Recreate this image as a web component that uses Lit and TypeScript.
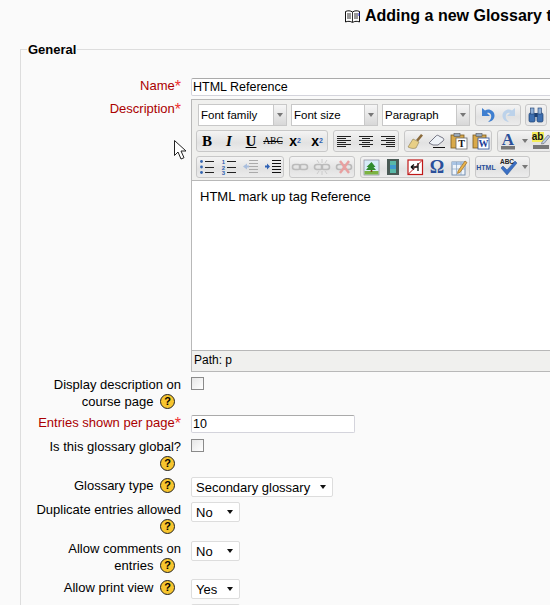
import { LitElement, html, css, svg } from 'lit';
import { customElement } from 'lit/decorators.js';

const lines = (x1: number, x2: number, ys: number[], color = '#222') =>
  ys.map((y) => svg`<line x1=${x1} x2=${x2} y1=${y} y2=${y} stroke=${color} stroke-width="1"></line>`);

const link = (c: string) => svg`
  <rect x="2.5" y="7.5" width="8" height="5" rx="2.5" fill="none" stroke=${c} stroke-width="1.6"></rect>
  <rect x="9.5" y="7.5" width="8" height="5" rx="2.5" fill="none" stroke=${c} stroke-width="1.6"></rect>`;

const ICONS: Record<string, unknown> = {
  left: lines(3, 17, [5.5, 9.5, 13.5]).concat(lines(3, 12, [7.5, 11.5, 15.5])),
  center: lines(3, 17, [5.5, 9.5, 13.5]).concat(lines(6, 14, [7.5, 11.5, 15.5])),
  right: lines(3, 17, [5.5, 9.5, 13.5]).concat(lines(8, 17, [7.5, 11.5, 15.5])),
  brush: svg`
    <path d="M11 9l5-6 2 1.5-5 6z" fill="#8a6a3a"></path>
    <path d="M3 16l5-8 6 3-3 6c-3 .8-5 .5-8-1z" fill="#e8cf86" stroke="#8a7a50" stroke-width=".6"></path>`,
  eraser: svg`
    <path d="M2 12l7-7c1-1 2-1 3 0l4 2c1 1 1 2 0 3l-5 4H6z" fill="#eef2f7" stroke="#667" stroke-width=".9"></path>
    <line x1="6" y1="16.5" x2="18" y2="16.5" stroke="#111"></line>`,
  pastetext: svg`
    <rect x="2" y="4" width="13" height="13" fill="#d9a94a" stroke="#7a5a20" stroke-width=".8"></rect>
    <rect x="5" y="2.5" width="6" height="3" fill="#9ab" stroke="#555" stroke-width=".6"></rect>
    <rect x="7" y="7" width="11" height="11" fill="#fff" stroke="#666" stroke-width=".8"></rect>
    <text x="12.5" y="16" text-anchor="middle" font-size="10" font-weight="700" font-family="Liberation Serif" fill="#111">T</text>`,
  pasteword: svg`
    <rect x="2" y="4" width="13" height="13" fill="#d9a94a" stroke="#7a5a20" stroke-width=".8"></rect>
    <rect x="5" y="2.5" width="6" height="3" fill="#9ab" stroke="#555" stroke-width=".6"></rect>
    <rect x="7" y="7" width="11" height="11" fill="#fff" stroke="#2a4f9a" stroke-width=".8"></rect>
    <text x="12.5" y="16" text-anchor="middle" font-size="10" font-weight="700" font-family="Liberation Serif" fill="#1f3f9a">W</text>`,
  bullist: svg`
    <circle cx="4.5" cy="4.5" r="1.4" fill="#3465b0"></circle>
    <circle cx="4.5" cy="10" r="1.4" fill="#3465b0"></circle>
    <circle cx="4.5" cy="15.5" r="1.4" fill="#3465b0"></circle>
    ${lines(8, 17, [4.5, 10.5, 15.5])}`,
  numlist: svg`
    <text x="4.5" y="7" text-anchor="middle" font-size="6" font-weight="700" font-family="Liberation Sans" fill="#2f5fb0">1</text>
    <text x="4.5" y="12.5" text-anchor="middle" font-size="6" font-weight="700" font-family="Liberation Sans" fill="#2f5fb0">2</text>
    <text x="4.5" y="18" text-anchor="middle" font-size="6" font-weight="700" font-family="Liberation Sans" fill="#2f5fb0">3</text>
    ${lines(8, 17, [4.5, 10.5, 15.5])}`,
  outdent: svg`
    ${lines(8, 17, [3.5, 6.5, 9.5, 12.5, 15.5], '#aaa')}
    <path d="M2 9.5l4-3v2h2v2H6v2z" fill="#a9bedd"></path>`,
  indent: svg`
    ${lines(9, 18, [3.5, 6.5, 9.5, 12.5, 15.5], '#111')}
    <path d="M7 9.5l-3-3v2H2v2h2v2z" fill="#2f62b5"></path>`,
  unlink: svg`
    ${link('#bbb')}
    <path d="M10 2v4M10 14v4M5 3l2 3M15 3l-2 3M5 17l2-3M15 17l-2-3" stroke="#ccc" fill="none"></path>`,
  linkoff: link('#bbb'),
  anchorx: svg`
    ${link('#b8b8b8')}
    <path d="M6 4l9 12M15 4L6 16" stroke="#e8a0a0" stroke-width="2.4" fill="none"></path>`,
  image: svg`
    <rect x="3" y="3" width="15" height="15" fill="#d6ecf8" stroke="#889" stroke-width=".7"></rect>
    <rect x="3.5" y="14" width="14" height="3.5" fill="#7cb342"></rect>
    <path d="M10.5 5l4 5-2 0 2.5 3h-10l2.5-3-2 0z" fill="#2e8b2e"></path>
    <rect x="9.7" y="13" width="1.6" height="2" fill="#7a4a1c"></rect>`,
  media: svg`
    <rect x="4" y="2" width="12" height="16" fill="#4a5a55"></rect>
    <rect x="7" y="4" width="6" height="12" fill="#59b8a8"></rect>
    <rect x="7" y="8" width="6" height="4" fill="#3f9ad0"></rect>`,
  anchor: svg`
    <rect x="3" y="3" width="14.5" height="14.5" fill="#fff" stroke="#c01818" stroke-width="1.2"></rect>
    <path d="M3.5 17L17 3.5" stroke="#c01818" stroke-width="1"></path>
    <path d="M13 6v8M13 10H6M6 10l3-2.5M6 10l3 2.5" stroke="#111" stroke-width="1.3" fill="none"></path>`,
  tableedit: svg`
    <rect x="3" y="5" width="13" height="13" fill="#eef4fb" stroke="#6c88aa" stroke-width=".9"></rect>
    <rect x="3" y="5" width="13" height="3" fill="#a9c4e4"></rect>
    <path d="M3 12h13M7.5 5v13M12 5v13" stroke="#8aa3c2" stroke-width=".7"></path>
    <path d="M9 14l7-10 2 1.5-7 10-2.5 1z" fill="#e9b44c" stroke="#8a5a18" stroke-width=".6"></path>`,
  spell: svg`
    <path d="M3 11l2-2 4 4 8-9 2 2-10 12z" fill="#3a6fc4" stroke="#24508f" stroke-width=".5"></path>
    <text x="9" y="7" text-anchor="middle" font-size="6.5" font-weight="700" font-family="Liberation Sans" fill="#222">ABC</text>`,
  undo: svg`
    <path d="M5 3v8h8l-3-3c3-1 5 2 4 5-.4 1.6-2 3-3 4 4-.4 6.5-3 6.5-6.5C17.5 6 12 3 8 5.5z" fill="#3f7fd0"></path>`,
  redo: svg`
    <path d="M15 3v8H7l3-3c-3-1-5 2-4 5 .4 1.6 2 3 3 4-4-.4-6.5-3-6.5-6.5C2.5 6 8 3 12 5.5z" fill="#bcd2ea"></path>`,
  find: svg`
    <rect x="3" y="8" width="6" height="9" rx="1.5" fill="#3d6fb0" stroke="#1d3f70" stroke-width=".7"></rect>
    <rect x="11" y="8" width="6" height="9" rx="1.5" fill="#3d6fb0" stroke="#1d3f70" stroke-width=".7"></rect>
    <rect x="4.5" y="3" width="3.5" height="6" fill="#8fb0d8" stroke="#1d3f70" stroke-width=".6"></rect>
    <rect x="12" y="3" width="3.5" height="6" fill="#8fb0d8" stroke="#1d3f70" stroke-width=".6"></rect>
    <rect x="8.5" y="8" width="3" height="4" fill="#1d3f70"></rect>`,
  forecolor: svg`
    <text x="10" y="14" text-anchor="middle" font-size="17" font-weight="700" font-family="Liberation Serif" fill="#2a4f9a">A</text>
    <rect x="3" y="15" width="14" height="3.5" fill="#777"></rect>`,
  hilite: svg`
    <rect x="1" y="1" width="12" height="10" fill="#f5ee5a"></rect>
    <text x="6.5" y="9" text-anchor="middle" font-size="10" font-family="Liberation Sans" fill="#111">ab</text>
    <path d="M11 11l6-7 2 1.5-6 7-2.5 .5z" fill="#b9cbe0" stroke="#667" stroke-width=".6"></path>
    <rect x="2" y="14" width="16" height="4" fill="#777"></rect>`,
};

@customElement('app-root')
export class AppRoot extends LitElement {
  static styles = css`
    :host {
      display: block;
      position: relative;
      width: 550px;
      height: 605px;
      overflow: hidden;
      background: #fafafa;
      font-family: 'Liberation Sans', Arial, sans-serif;
      font-size: 13px;
      color: #000;
    }
    .page {
      width: 1000px;
    }
    .title {
      display: flex;
      align-items: center;
      gap: 5px;
      height: 32px;
      padding-left: 345px;
      font-size: 16px;
      font-weight: 700;
      white-space: nowrap;
    }
    .title h2 {
      margin: 0;
      font-size: 16px;
    }
    fieldset {
      margin: 10px 0 0 20px;
      padding: 0;
      width: 900px;
      border: 0;
      border-top: 1px solid #ddd;
      border-left: 1px solid #ddd;
    }
    legend {
      margin-left: 6px;
      padding: 0 1px;
      font-size: 13px;
      font-weight: 700;
    }
    .rows {
      padding-top: 21px;
    }
    .row {
      display: grid;
      grid-template-columns: 160px 1fr;
      column-gap: 10px;
    }
    .label {
      margin-top: -1px;
      text-align: right;
      line-height: 17px;
    }
    .one {
      padding-top: 1px;
    }
    .two {
      padding-top: 2px;
    }
    .req {
      color: #aa0000;
    }
    .star {
      color: #f03030;
      font-size: 16px;
      line-height: 10px;
      vertical-align: -2px;
    }
    .help {
      display: inline-block;
      box-sizing: border-box;
      width: 15px;
      height: 15px;
      margin: 0 6px 0 3px;
      vertical-align: 1px;
      border: 1px solid #222;
      border-radius: 50%;
      background: #f7c52e;
      font-size: 11px;
      font-weight: 700;
      line-height: 13px;
      text-align: center;
    }
    .text {
      display: block;
      box-sizing: border-box;
      height: 18px;
      border: 1px solid #d4d4dc;
      border-top-color: #aaa;
      border-radius: 2px;
      background: #fff;
      padding: 0 1px;
      font: inherit;
      font-size: 12.5px;
      color: #000;
    }
    .check {
      box-sizing: border-box;
      width: 13px;
      height: 13px;
      border: 1px solid #8a8a8a;
      background: linear-gradient(135deg, #e6e6e6, #fff);
    }
    .select {
      box-sizing: border-box;
      display: flex;
      align-items: center;
      justify-content: space-between;
      height: 20px;
      padding: 0 6px 0 4px;
      border: 1px solid #ddd;
      border-radius: 2px;
      background: #fff;
      font-size: 13px;
      white-space: nowrap;
    }
    .select i {
      width: 0;
      height: 0;
      border: 3.5px solid transparent;
      border-top: 4px solid #111;
      border-bottom: 0;
    }
    .editor {
      box-sizing: border-box;
      width: 700px;
      height: 273px;
      border: 1px solid #b8b8b8;
      background: #f0f0ee;
      display: flex;
      flex-direction: column;
    }
    .toolbar {
      height: 76px;
      padding: 4px 0 0 4px;
      display: flex;
      flex-direction: column;
      gap: 4px;
      font-size: 11.5px;
    }
    .tbrow {
      display: flex;
      gap: 5px;
      height: 22px;
    }
    .first {
      gap: 4px;
      margin-left: 2px;
    }
    .mce-select {
      box-sizing: border-box;
      display: flex;
      height: 22px;
      border: 1px solid #c8c8c8;
      background: #fff;
    }
    .mce-select span {
      flex: 1;
      padding: 4px 0 0 2px;
      color: #000;
    }
    .mce-select b {
      width: 12px;
      background: linear-gradient(#f6f6f6, #d8d8d8);
      border-left: 1px solid #c8c8c8;
      display: flex;
      align-items: center;
      justify-content: center;
    }
    .mce-select b::after,
    .arrow::after {
      content: '';
      border: 3px solid transparent;
      border-top: 4px solid #777;
      border-bottom: 0;
    }
    .group {
      display: flex;
      box-sizing: border-box;
      height: 22px;
      border: 1px solid #c8c8c8;
      border-radius: 3px;
      background: linear-gradient(#f4f4f4, #e2e2e2 60%, #ececec);
    }
    .group > :first-child {
      margin-left: -1px;
    }
    .group > :last-child {
      margin-right: -1px;
    }
    .undo {
      margin-left: 1px;
    }
    .undo .btn {
      width: 23px;
    }
    .btn {
      flex: none;
      width: 22px;
      display: flex;
      align-items: center;
      justify-content: center;
      font-weight: 700;
    }
    .btn svg {
      width: 20px;
      height: 20px;
      display: block;
    }
    .glyph {
      font-family: 'Liberation Serif', serif;
      font-size: 15px;
    }
    .omega {
      color: #2a4f9a;
      font-size: 18px;
    }
    .small {
      font-size: 9.5px;
      font-family: 'Liberation Serif', serif;
      text-decoration: line-through;
      font-weight: 400;
    }
    .script {
      font-size: 14px;
    }
    sub, sup {
      font-size: 7px;
      color: #2f5fb0;
      line-height: 0;
    }
    .arrow {
      flex: none;
      width: 11px;
      display: flex;
      align-items: center;
      justify-content: center;
    }
    .html {
      width: 22px;
      font-size: 7px;
      color: #2a4f9a;
    }
    .body {
      flex: 1;
      background: #fff;
      border-top: 1px solid #b8b8b8;
      border-bottom: 1px solid #b8b8b8;
      padding: 8px 8px;
      font-size: 13px;
      line-height: 15px;
    }
    .path {
      height: 20px;
      line-height: 19px;
      padding-left: 2px;
      font-size: 12px;
    }
    .cursor {
      position: absolute;
      left: 174px;
      top: 140px;
    }
  `;

  private star() {
    return html`<span class="star">*</span>`;
  }

  private help() {
    return html`<span class="help">?</span>`;
  }

  private btn(name: string) {
    return html`<span class="btn"><svg viewBox="0 0 20 20">${ICONS[name]}</svg></span>`;
  }

  private mceSelect(label: string, width: number) {
    return html`<div class="mce-select" style="width:${width}px"><span>${label}</span><b></b></div>`;
  }

  private select(label: string, width: number) {
    return html`<div class="select" style="width:${width}px">${label}<i></i></div>`;
  }

  private toolbar() {
    return html`
      <div class="toolbar">
        <div class="tbrow first">
          ${this.mceSelect('Font family', 89)} ${this.mceSelect('Font size', 87)} ${this.mceSelect('Paragraph', 88)}
          <div class="group undo">${this.btn('undo')}${this.btn('redo')}</div>
          <div class="group">${this.btn('find')}</div>
        </div>
        <div class="tbrow">
          <div class="group">
            <span class="btn glyph">B</span>
            <span class="btn glyph"><em>I</em></span>
            <span class="btn glyph"><u>U</u></span>
            <span class="btn small">ABC</span>
            <span class="btn script">x<sub>2</sub></span>
            <span class="btn script">x<sup>2</sup></span>
          </div>
          <div class="group">${this.btn('left')}${this.btn('center')}${this.btn('right')}</div>
          <div class="group">${this.btn('brush')}${this.btn('eraser')}${this.btn('pastetext')}${this.btn('pasteword')}</div>
          <div class="group">${this.btn('forecolor')}<span class="arrow"></span>${this.btn('hilite')}</div>
        </div>
        <div class="tbrow">
          <div class="group">${this.btn('bullist')}${this.btn('numlist')}${this.btn('outdent')}${this.btn('indent')}</div>
          <div class="group">${this.btn('linkoff')}${this.btn('unlink')}${this.btn('anchorx')}</div>
          <div class="group">${this.btn('image')}${this.btn('media')}${this.btn('anchor')}<span class="btn glyph omega">Ω</span>${this.btn('tableedit')}</div>
          <div class="group"><span class="btn html">HTML</span>${this.btn('spell')}<span class="arrow"></span></div>
        </div>
      </div>
    `;
  }

  render() {
    return html`
      <div class="page">
        <div class="title">
          <svg width="15" height="15" viewBox="0 0 15 15">
            <path d="M.5 2.5c2-1 5-1 7 .5 2-1.5 5-1.5 7-.5V13c-2-1-5-1-7 .5-2-1.5-5-1.5-7-.5z" fill="#fff" stroke="#111"></path>
            <path d="M7.5 3v10M2 5h4M2 7h4M2 9h4M9 5h4M9 7h4M9 9h4" stroke="#333" fill="none"></path>
            <path d="M14 4v3" stroke="#22c" fill="none"></path>
          </svg>
          <h2>Adding a new Glossary to Topic 1</h2>
        </div>
        <fieldset>
          <legend>General</legend>
          <div class="rows">
            <div class="row" style="height:21px">
              <div class="label req">Name${this.star()}</div>
              <input class="text" style="width:600px" value="HTML Reference" />
            </div>
            <div class="row" style="height:278px">
              <div class="label req two">Description${this.star()}</div>
              <div class="editor">
                ${this.toolbar()}
                <div class="body">HTML mark up tag Reference</div>
                <div class="path">Path: p</div>
              </div>
            </div>
            <div class="row" style="height:38px">
              <div class="label">Display description on<br />course page ${this.help()}</div>
              <div class="check"></div>
            </div>
            <div class="row" style="height:24px">
              <div class="label req">Entries shown per page${this.star()}</div>
              <input class="text" style="width:164px" value="10" />
            </div>
            <div class="row" style="height:38px">
              <div class="label">Is this glossary global?<br />${this.help()}</div>
              <div class="check"></div>
            </div>
            <div class="row" style="height:25px">
              <div class="label one">Glossary type ${this.help()}</div>
              ${this.select('Secondary glossary', 142)}
            </div>
            <div class="row" style="height:39px">
              <div class="label">Duplicate entries allowed<br />${this.help()}</div>
              ${this.select('No', 49)}
            </div>
            <div class="row" style="height:38px">
              <div class="label">Allow comments on<br />entries ${this.help()}</div>
              ${this.select('No', 49)}
            </div>
            <div class="row" style="height:25px">
              <div class="label one">Allow print view ${this.help()}</div>
              ${this.select('Yes', 49)}
            </div>
            <div class="row" style="height:25px">
              <div class="label"></div>
              ${this.select('', 49)}
            </div>
          </div>
        </fieldset>
      </div>
      <svg class="cursor" width="15" height="21" viewBox="0 0 15 21">
        <path d="M.5.5v15l3.5-3.5 3 7 3-1.3-3-6.7h5z" fill="#fff" stroke="#222"></path>
      </svg>
    `;
  }
}
